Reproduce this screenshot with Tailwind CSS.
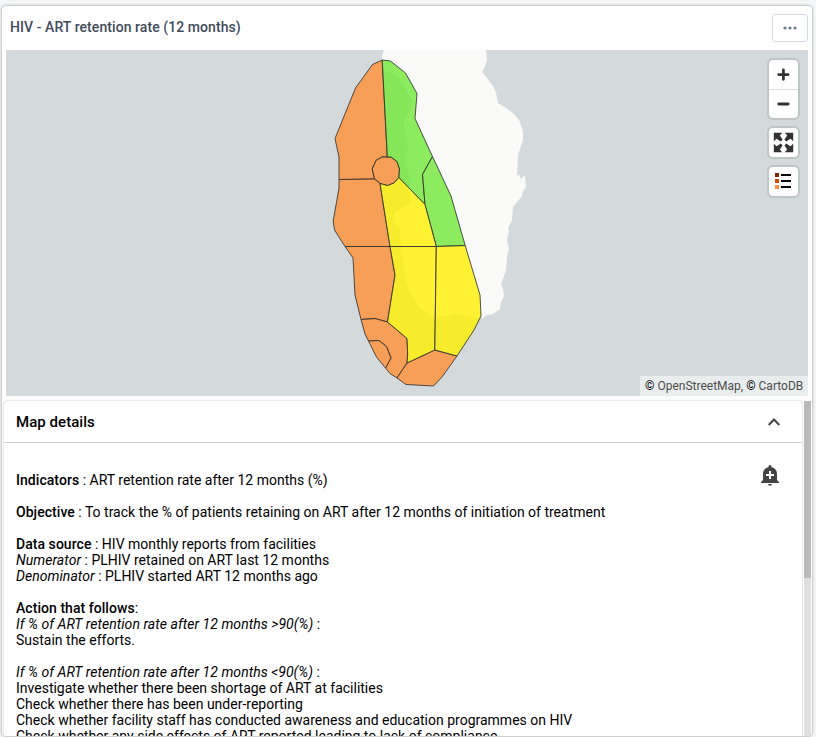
<!DOCTYPE html>
<html lang="en">
<head>
<meta charset="utf-8">
<title>HIV - ART retention rate</title>
<script src="https://cdn.jsdelivr.net/npm/@tailwindcss/browser@4"></script>
</head>
<body class="h-[737px] overflow-hidden bg-[#f4f5f7] pt-[6px] pl-[2px] font-[Roboto,sans-serif]">
<main class="flex h-[730px] w-[810px] flex-col overflow-hidden rounded-[4px] bg-white shadow-[0_0_2px_1px_#bfc1c4]">
  <header class="flex h-[44px] shrink-0 items-start justify-between pr-[4px] pl-2">
    <h1 class="pt-[11px] text-[14px] leading-5 font-medium tracking-[0.07px] whitespace-nowrap text-[#404b5a]">HIV - ART retention rate (12 months)</h1>
    <button class="mt-2 flex h-[28px] w-[36px] items-center justify-center rounded-[3px] border border-[#d3dae3]" aria-label="More">
      <svg class="h-4 w-4" viewBox="0 0 16 16" fill="#6e7a8a"><circle cx="3" cy="8" r="1.6"/><circle cx="8" cy="8" r="1.6"/><circle cx="13" cy="8" r="1.6"/></svg>
    </button>
  </header>

  <section class="relative mx-1 h-[346px] w-[802px] shrink-0 overflow-hidden bg-[#d4dadc]">
    <svg class="block h-[346px] w-[802px]" viewBox="6 50 802 346">
      <path fill="#fafaf8" d="M384 50L382 55 382 60 384 70 397 76 405 88 412 100 411 110 405 117 404 128 408 145 405 160 410 178 410 203 402 208 394 214 393 220 400 228 401 250 404 265 406 282 410 292 420 308 433 317 445 316 455 313 470 317 483 318 487 315 493 314 500 309 501 302 504 296 503 289 501 284 503 279 506 270 507 257 509 250 507 240 509 231 508 228 512 220 513 207 522 196 523 191 526 187 525 175 521 179 519 174 517 177 518 155 523 140 523 131 519 120 513 113 506 108 498 103 496 93 493 86 487 78 482 72 485 67 487 60 486 50Z"/>
      <g fill-opacity=".8" stroke="#333" stroke-opacity=".85" stroke-width="1" stroke-linejoin="round">
        <g fill="#ff9034">
          <path d="M382.2 60L372.5 64.500 355.500 88 335 138.500 339 157 339 179.500 374.500 179 372.200 169 376 160.500 382 157 387.300 157Z"/>
          <path d="M382 157L376 160.500 372.200 169 374.500 178.500 380 183.500 387.500 185.500 394 183 398.800 177.500 399.500 169 397 161.500 391 157Z"/>
          <path d="M339 179.500L374.500 179 380 183.500 390 246.500 345 246.500 334.500 230 333.200 221 339 188Z"/>
          <path d="M345 246.500L353 258 355 295 361 319.500 375 318.500 387.500 322 395 275 390 246.500Z"/>
          <path d="M361 319.500L375 318.500 387.500 322 407 338.500 407.700 354 407 363 397 378 390 373.500 385.500 368 391 358 386.500 346.500 379 340.500 368.500 341 365 334Z"/>
          <path d="M368.500 341L379 340.500 386.500 346.500 391 358 385.500 368 376.500 357Z"/>
          <path d="M434.500 350L457 356 442 377 433.500 386 406 384.500 397 378 407 363Z"/>
        </g>
        <g fill="#70e836">
          <path d="M382.200 60L390.500 61 405.500 73 417 93.500 415 118.500 432.500 156.500 422.500 174.500 425 204.500 398.800 177.500 399.500 169 397 161.500 391 157 387.300 157Z"/>
          <path d="M432.500 156.500L422.500 174.500 425 204.500 436.300 246.500 465.200 245.500 451 196Z"/>
        </g>
        <g fill="#fff000">
          <path d="M380 183.500L387.500 185.500 394 183 398.800 177.500 425 204.500 436.300 246.500 390 246.500Z"/>
          <path d="M390 246.500L395 275 387.500 322 407 338.500 407.700 354 407 363 434.800 350 436.300 246.500Z"/>
          <path d="M436.300 246.500L465.200 245.500 480 295 481 316 474 330 457 356 434.800 350Z"/>
        </g>
      </g>
    </svg>

    <div class="absolute top-[8px] right-[8px] flex flex-col">
      <div class="h-[62px] w-[33px] rounded-[6px] border-2 border-[#bfc4c6] bg-white">
        <svg class="block h-[58px] w-[29px]" viewBox="0 0 29 58" fill="none" stroke="#333" stroke-width="2.8" stroke-linecap="round"><path d="M9.700 14.600H19.100M14.400 9.900V19.300M9.700 44H19.100"/><path d="M0 29.500H29" stroke="#ddd" stroke-width="1"/></svg>
      </div>
      <div class="mt-[6px] h-[33px] w-[33px] rounded-[6px] border-2 border-[#bfc4c6] bg-white">
        <svg class="block h-[29px] w-[29px]" viewBox="0 0 29 29" fill="#333"><path d="M4.800 4.800H13.200L10.800 7.400 13.600 11.600 11.800 13.400 7.600 10.800 4.800 13.200Z"/><path d="M24.200 4.800H15.800L18.200 7.400 15.400 11.600 17.200 13.400 21.400 10.800 24.200 13.200Z"/><path d="M4.800 24.200H13.200L10.800 21.600 13.600 17.400 11.800 15.600 7.600 18.200 4.800 15.800Z"/><path d="M24.200 24.200H15.800L18.200 21.600 15.400 17.400 17.200 15.600 21.400 18.200 24.200 15.800Z"/></svg>
      </div>
      <div class="mt-[6px] h-[33px] w-[33px] rounded-[6px] border-2 border-[#bfc4c6] bg-white">
        <svg class="block h-[29px] w-[29px]" viewBox="0 0 29 29"><path fill="#7f2704" d="M6 6h4v4H6z"/><path fill="#d94801" d="M6 12h4v4H6z"/><path fill="#fd8d3c" d="M6 18h4v4H6z"/><path fill="#000" d="M12 7h10v2H12zM12 13h10v2H12zM12 19h10v2H12z"/></svg>
      </div>
    </div>
    <div class="absolute right-0 bottom-0 flex h-[20px] w-[168px] items-center bg-[#e9edee] pl-[5px] text-[12px] leading-5 whitespace-nowrap text-[#4d4d4d]"><span><span class="text-black">©</span> OpenStreetMap, <span class="text-black">©</span> CartoDB</span></div>
  </section>

  <section class="mt-[5px] flex min-h-0 flex-1 pl-[2px]">
    <article class="w-[798px] shrink-0 overflow-hidden rounded-t-[4px] bg-white text-black shadow-[0_0_2px_#aaa]">
      <div class="flex h-[42px] items-center justify-between border-b border-[#cecece] pr-[22px] pl-3">
        <h2 class="text-[15px] leading-5 font-medium tracking-[0.05px]">Map details</h2>
        <svg class="h-3 w-3" viewBox="0 0 12 12" fill="none" stroke="#444" stroke-width="2"><path d="M.7 9L6 3.500 11.300 9"/></svg>
      </div>
      <div class="flex justify-between pr-[22px] pl-3">
        <div class="pt-[29px] text-[14px] leading-4 whitespace-nowrap">
          <p><b class="font-medium tracking-[0.05px]">Indicators</b> : ART retention rate after 12 months (%)</p>
          <p class="mt-4"><b class="font-medium tracking-[0.05px]">Objective</b> : To track the % of patients retaining on ART after 12 months of initiation of treatment</p>
          <p class="mt-4"><b class="font-medium tracking-[0.05px]">Data source</b> : HIV monthly reports from facilities</p>
          <p><i class="tracking-[0.05px]">Numerator</i> : PLHIV retained on ART last 12 months</p>
          <p><i class="tracking-[0.05px]">Denominator</i> : PLHIV started ART 12 months ago</p>
          <p class="mt-4"><b class="font-medium tracking-[0.05px]">Action that follows</b>:</p>
          <p><i class="tracking-[0.05px]">If % of ART retention rate after 12 months &gt;90(%)</i> :</p>
          <p>Sustain the efforts.</p>
          <p class="mt-4"><i class="tracking-[0.05px]">If % of ART retention rate after 12 months &lt;90(%)</i> :</p>
          <p>Investigate whether there been shortage of ART at facilities</p>
          <p>Check whether there has been under-reporting</p>
          <p>Check whether facility staff has conducted awareness and education programmes on HIV</p>
          <p>Check whether any side effects of ART reported leading to lack of compliance</p>
        </div>
        <svg class="mt-[20px] h-[24px] w-[20px]" viewBox="0 0 20 24"><path fill="#444" d="M10 2a1.500 1.500 0 0 1 1.500 1.500v.8c3.300.7 5.500 3.300 5.500 6.700V17l2 2v1H1v-1l2-2v-6c0-3.400 2.200-6 5.500-6.700V3.500A1.500 1.500 0 0 1 10 2zM8 21h4a2 1.800 0 0 1-4 0z"/><path d="M6 12h8M10 8v8" stroke="#fff" stroke-width="2"/></svg>
      </div>
    </article>
    <div class="ml-[2px] w-[7px] bg-[#e0e0e0]"><div class="h-[177px] bg-[#b9b9b9]"></div></div>
  </section>
</main>
</body>
</html>
